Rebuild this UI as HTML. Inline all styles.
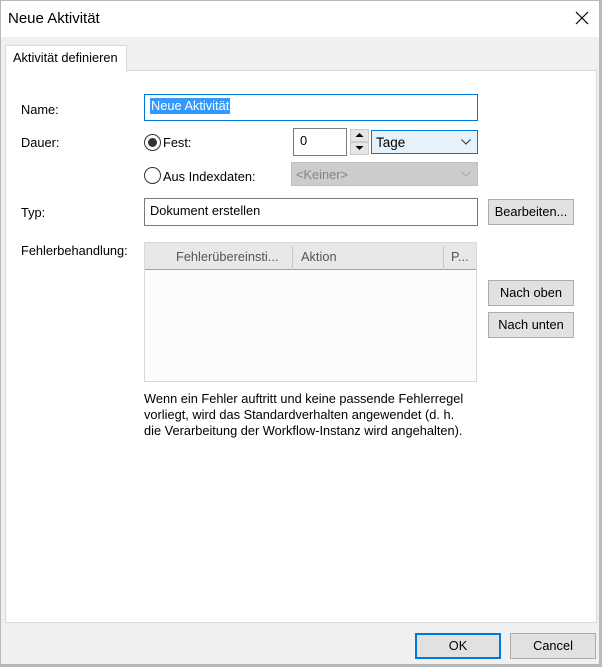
<!DOCTYPE html>
<html><head><meta charset="utf-8"><style>
*{box-sizing:border-box;margin:0;padding:0}
body{width:602px;height:667px;overflow:hidden;font-family:"Liberation Sans",Arial,sans-serif;font-size:12.8px;color:#000;background:#f0f0f0;position:relative}
.a{position:absolute}
.win{left:0;top:0;width:602px;height:667px;border:1px solid #b9b9b9;border-width:1px 3px 3px 1px}
.btn{background:#e1e1e1;border:1px solid #adadad;text-align:center}
</style></head><body>
<div class="a win"></div>
<div class="a" style="left:1px;top:1px;width:598px;height:36px;background:#fff"></div>
<div class="a" style="left:8px;top:10px;font-size:15px">Neue Aktivität</div>
<svg class="a" style="left:575px;top:11px" width="14" height="14"><path d="M1 1L13 13M13 1L1 13" stroke="#000" stroke-width="1.2"/></svg>
<div class="a" style="left:5px;top:70px;width:592px;height:553px;background:#fff;border:1px solid #d9d9d9"></div>
<div class="a" style="left:5px;top:45px;width:122px;height:27px;background:#fff;border:1px solid #d9d9d9;border-bottom:none"></div>
<div class="a" style="left:13px;top:50px">Aktivität definieren</div>
<div class="a" style="left:21px;top:102px">Name:</div>
<div class="a" style="left:144px;top:94px;width:334px;height:27px;border:1px solid #0078d7"></div>
<div class="a" style="left:150px;top:98px;background:#3399ff;color:#fff;padding:0 1px;height:16px;line-height:16px">Neue Aktivität</div>
<div class="a" style="left:21px;top:135px">Dauer:</div>
<div class="a" style="left:144px;top:134px;width:17px;height:17px;border:1px solid #333;border-radius:50%"></div>
<div class="a" style="left:148px;top:138px;width:9px;height:9px;background:#333;border-radius:50%"></div>
<div class="a" style="left:163px;top:135px">Fest:</div>
<div class="a" style="left:293px;top:128px;width:54px;height:28px;border:1px solid #7a7a7a;background:#fff"></div>
<div class="a" style="left:300px;top:133px">0</div>
<div class="a" style="left:350px;top:129px;width:19px;height:13px;background:#e6e6e6;border:1px solid #ccc"></div>
<div class="a" style="left:350px;top:142px;width:19px;height:13px;background:#e6e6e6;border:1px solid #ccc"></div>
<svg class="a" style="left:355px;top:132px" width="9" height="20"><path d="M0.5 5L4.5 1L8.5 5Z M0.5 14L4.5 18L8.5 14Z" fill="#000"/></svg>
<div class="a" style="left:371px;top:130px;width:107px;height:24px;background:#e5f1fb;border:1px solid #0078d7"></div>
<div class="a" style="left:376px;top:135px;font-size:13.5px">Tage</div>
<svg class="a" style="left:461px;top:139px" width="10" height="6"><path d="M0.5 0.5L5 5L9.5 0.5" stroke="#333" fill="none"/></svg>
<div class="a" style="left:144px;top:167px;width:17px;height:17px;border:1px solid #333;border-radius:50%"></div>
<div class="a" style="left:163px;top:169px">Aus Indexdaten:</div>
<div class="a" style="left:291px;top:162px;width:187px;height:24px;background:#ccc;border:1px solid #bfbfbf"></div>
<div class="a" style="left:296px;top:167px;color:#838383">&lt;Keiner&gt;</div>
<svg class="a" style="left:461px;top:171px" width="10" height="6"><path d="M0.5 0.5L5 5L9.5 0.5" stroke="#aaa" fill="none"/></svg>
<div class="a" style="left:21px;top:205px">Typ:</div>
<div class="a" style="left:144px;top:198px;width:334px;height:28px;border:1px solid #7a7a7a"></div>
<div class="a" style="left:150px;top:203px">Dokument erstellen</div>
<div class="a btn" style="left:488px;top:199px;width:86px;height:26px;line-height:24px">Bearbeiten...</div>
<div class="a" style="left:21px;top:243px">Fehlerbehandlung:</div>
<div class="a" style="left:144px;top:242px;width:333px;height:140px;background:#fcfcfc;border:1px solid #d9d9d9"></div>
<div class="a" style="left:145px;top:243px;width:331px;height:27px;background:#e8e8e8;border-bottom:1px solid #a0a0a0"></div>
<div class="a" style="left:292px;top:246px;width:1px;height:24px;background:#c8c8c8"></div>
<div class="a" style="left:443px;top:246px;width:1px;height:24px;background:#c8c8c8"></div>
<div class="a" style="left:176px;top:249px;color:#555">Fehlerübereinsti...</div>
<div class="a" style="left:301px;top:249px;color:#555">Aktion</div>
<div class="a" style="left:451px;top:249px;color:#555">P...</div>
<div class="a btn" style="left:488px;top:280px;width:86px;height:26px;line-height:24px">Nach oben</div>
<div class="a btn" style="left:488px;top:312px;width:86px;height:26px;line-height:24px">Nach unten</div>
<div class="a" style="left:144px;top:391px;line-height:16px">Wenn ein Fehler auftritt und keine passende Fehlerregel<br>vorliegt, wird das Standardverhalten angewendet (d. h.<br>die Verarbeitung der Workflow-Instanz wird angehalten).</div>
<div class="a btn" style="left:415px;top:633px;width:86px;height:26px;line-height:22px;border:2px solid #0078d7">OK</div>
<div class="a btn" style="left:510px;top:633px;width:86px;height:26px;line-height:24px">Cancel</div>
</body></html>
